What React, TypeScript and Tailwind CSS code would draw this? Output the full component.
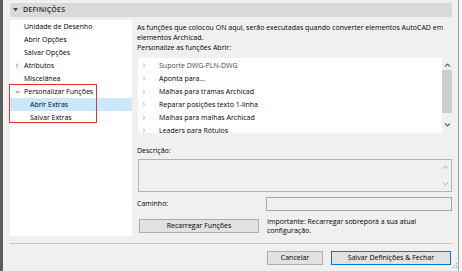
function ChevronRight({ color = '#a0a0a0' }: { color?: string }) {
  return (
    <svg width="4" height="5" viewBox="0 0 4 5" className="shrink-0">
      <path d="M1 0.8 L3 2.5 L1 4.2" fill="none" stroke={color} strokeWidth="0.9" />
    </svg>
  );
}

function ChevronDown({ color = '#707070' }: { color?: string }) {
  return (
    <svg width="5" height="4" viewBox="0 0 5 4" className="shrink-0">
      <path d="M0.8 1 L2.5 3 L4.2 1" fill="none" stroke={color} strokeWidth="0.9" />
    </svg>
  );
}

function ScrollArrow({ up, color }: { up?: boolean; color: string }) {
  return (
    <svg width="7" height="4" viewBox="0 0 7 4">
      <path d={up ? 'M1 3.5 L3.5 1 L6 3.5' : 'M1 0.5 L3.5 3 L6 0.5'} fill="none" stroke={color} strokeWidth="1.1" />
    </svg>
  );
}

const navItems = [
  { label: 'Unidade de Desenho', indent: 0 },
  { label: 'Abrir Opções', indent: 0 },
  { label: 'Salvar Opções', indent: 0 },
  { label: 'Atributos', indent: 0, arrow: 'right' },
  { label: 'Miscelânea', indent: 0 },
  { label: 'Personalizar Funções', indent: 0, arrow: 'down' },
  { label: 'Abrir Extras', indent: 1, selected: true },
  { label: 'Salvar Extras', indent: 1 },
];

const functions = [
  { label: 'Suporte DWG-PLN-DWG', dim: true },
  { label: 'Aponta para...' },
  { label: 'Malhas para tramas Archicad' },
  { label: 'Reparar posições texto 1-linha' },
  { label: 'Malhas para malhas Archicad' },
  { label: 'Leaders para Rótulos' },
];

export default function App() {
  return (
    <div className="flex h-[271px] w-[462px] overflow-hidden bg-[#f7f7f7] font-['Open_Sans',sans-serif] text-[7px] leading-[10px] text-black">
      <div className="w-[3px] shrink-0 bg-[#5c5c5c]" />
      <div className="flex w-[456px] shrink-0 flex-col border-r border-[#9c9c9c] bg-[#f0f0f0] pl-[7px] pr-[6px] pt-[3px]">
        {/* header */}
        <div className="flex h-[14px] items-center gap-[5px] rounded-[2px] bg-[#dadada] pl-[3px]">
          <svg width="5" height="4" viewBox="0 0 5 4">
            <path d="M0 0 L5 0 L2.5 3.5 Z" fill="#4a4a4a" />
          </svg>
          <span className="font-semibold tracking-[0.2px] text-[#2a2a2a]">DEFINIÇÕES</span>
        </div>

        {/* body */}
        <div className="mt-[3px] flex h-[216px]">
          <div className="relative w-[122px] shrink-0 bg-white">
            {navItems.map((item) => (
              <div
                key={item.label}
                className={`flex h-[13px] items-center ${item.selected ? 'bg-[#cce8ff]' : ''} ${item.indent ? 'pl-[17px]' : 'pl-[3px]'}`}
              >
                {!item.indent && (
                  <span className="flex w-[8px] justify-center">
                    {item.arrow === 'right' && <ChevronRight color="#8a8a8a" />}
                    {item.arrow === 'down' && <ChevronDown color="#606060" />}
                  </span>
                )}
                <span className="ml-[3px] whitespace-nowrap">{item.label}</span>
              </div>
            ))}
            <div className="absolute left-[-1px] top-[64px] h-[39px] w-[88px] border-[1.5px] border-[#e03434]" />
          </div>

          <div className="ml-[5px] flex flex-1 flex-col pt-[3px]">
            <p className="whitespace-nowrap">
              As funções que colocou ON aqui, serão executadas quando converter elementos AutoCAD em
              <br />
              elementos Archicad.
              <br />
              Personalize as funções Abrir:
            </p>

            <div className="ml-[1px] mt-[5px] flex h-[75px]">
              <div className="flex-1 overflow-hidden bg-white pt-[1px]">
                {functions.map((f) => (
                  <div key={f.label} className="flex h-[13px] items-center pl-[4px]">
                    <ChevronRight color="#b0b0b0" />
                    <span className={`ml-[13px] whitespace-nowrap ${f.dim ? 'text-[#4a4a4a]' : ''}`}>{f.label}</span>
                  </div>
                ))}
              </div>
              <div className="flex w-[10px] flex-col items-center pt-[5px]">
                <ScrollArrow up color="#606060" />
                <div className="mt-[3px] h-[43px] w-[10px] bg-[#cdcdcd]" />
                <div className="mt-[10px]">
                  <ScrollArrow color="#606060" />
                </div>
              </div>
            </div>

            <div className="mt-[13px]">Descrição:</div>
            <div className="ml-[1px] mt-[3px] flex h-[33px] justify-end border border-[#b4b4b4] bg-[#f0f0f0]">
              <div className="flex w-[10px] flex-col items-center justify-between py-[5px] pr-[2px]">
                <ScrollArrow up color="#c4c4c4" />
                <ScrollArrow color="#c4c4c4" />
              </div>
            </div>

            <div className="mt-[5px] flex items-center">
              <span className="w-[129px]">Caminho:</span>
              <div className="h-[14px] flex-1 border border-[#a8a8a8] bg-[#f0f0f0]" />
            </div>

            <div className="mt-[8px] flex items-start">
              <button className="ml-[2px] flex h-[14px] w-[120px] items-center justify-center border border-[#adadad] bg-[#e1e1e1] text-[7px]">
                Recarregar Funções
              </button>
              <p className="ml-[8px] mt-[-2px] leading-[9px]">
                Importante: Recarregar sobreporá a sua atual
                <br />
                configuração.
              </p>
            </div>
          </div>
        </div>

        {/* footer */}
        <div className="mt-[7px] h-px bg-[#c4c4c4]" />
        <div className="mt-[7px] flex justify-end gap-[8px] pr-[1px]">
          <button className="flex h-[14px] w-[56px] items-center justify-center border border-[#adadad] bg-[#e1e1e1] text-[7px]">
            Cancelar
          </button>
          <button className="flex h-[14px] w-[120px] items-center justify-center border border-[#0078d7] bg-[#e1e1e1] text-[7px]">
            Salvar Definições &amp; Fechar
          </button>
        </div>
        <div className="flex justify-end">
          <svg width="6" height="6" viewBox="0 0 6 6" className="mt-[-2px] mr-[-6px]">
            <rect x="4" y="0" width="1" height="1" fill="#a0a0a0" />
            <rect x="2" y="2" width="1" height="1" fill="#a0a0a0" />
            <rect x="4" y="2" width="1" height="1" fill="#a0a0a0" />
            <rect x="0" y="4" width="1" height="1" fill="#a0a0a0" />
            <rect x="2" y="4" width="1" height="1" fill="#a0a0a0" />
            <rect x="4" y="4" width="1" height="1" fill="#a0a0a0" />
          </svg>
        </div>
      </div>
    </div>
  );
}
